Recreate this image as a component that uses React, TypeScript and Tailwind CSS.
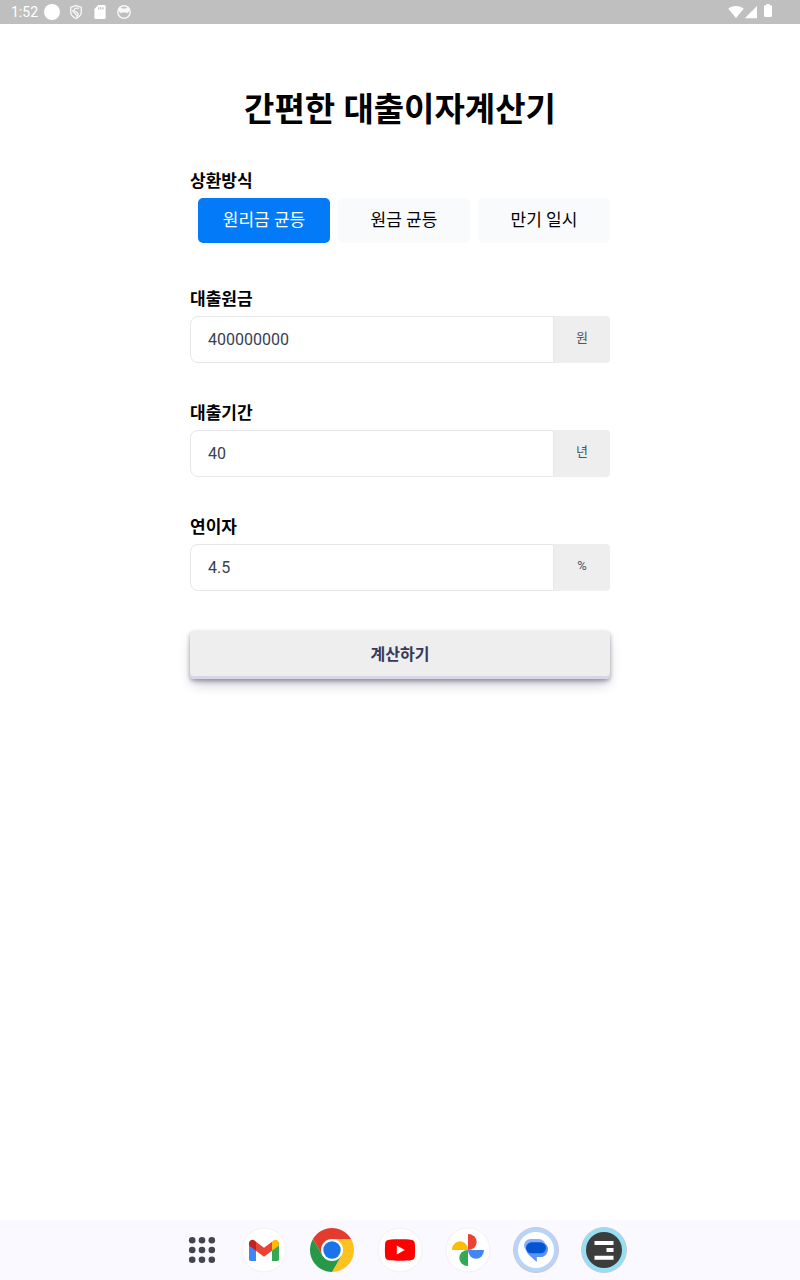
import { useState } from 'react'
import type { FormEvent, ReactNode } from 'react'

const METHODS = ['원리금 균등', '원금 균등', '만기 일시']

type AmountFieldProps = {
  id: string
  label: string
  unit: string
  value: string
  onChange: (value: string) => void
}

function AmountField({ id, label, unit, value, onChange }: AmountFieldProps) {
  return (
    <div>
      <label htmlFor={id} className="mb-0.5 block text-[17px] leading-[30px] font-bold text-black">
        {label}
      </label>
      <div className="flex h-[47px]">
        <input
          id={id}
          type="text"
          inputMode="decimal"
          value={value}
          onChange={(event) => onChange(event.target.value)}
          className="min-w-0 flex-1 rounded-l-lg border border-gray-200 bg-white px-[17px] text-base text-gray-700 outline-none"
        />
        <span className="flex w-14 items-center justify-center rounded-r-[4px] bg-[#eeeeee] pb-1 text-[13px] text-gray-600">
          {unit}
        </span>
      </div>
    </div>
  )
}

function StatusBar() {
  return (
    <header className="flex h-6 items-center justify-between bg-[#bfbfbf] pr-6 pl-[11px] text-white">
      <div className="flex items-center gap-2">
        <span className="-mr-0.5 text-sm leading-6">1:52</span>
        <svg viewBox="0 0 16 16" className="size-4" fill="currentColor" aria-hidden="true">
          <circle cx="8" cy="8" r="8" />
        </svg>
        <svg viewBox="0 0 16 16" className="size-4" fill="none" stroke="currentColor" strokeWidth="1.4" opacity="0.85" aria-hidden="true">
          <path d="M8 1.500 2.700 3.400v4.200c0 3.200 2.200 5.800 5.300 7 3.100-1.200 5.300-3.800 5.300-7V3.400z" />
          <path d="M11 4.500C8.500 3.500 5.800 4.500 6.300 6.400c.5 1.700 4 1.700 3.900 3.800-.1 1.100-.8 1.900-2 2.600M4.300 6c.8 2.600 2.600 3.400 5.200 5.800" />
        </svg>
        <svg viewBox="0 0 16 16" className="size-4" fill="currentColor" aria-hidden="true">
          <path fillRule="evenodd" d="M6.300 1h6a1.300 1.300 0 0 1 1.300 1.300v11.400a1.300 1.300 0 0 1-1.300 1.300H3.700a1.300 1.300 0 0 1-1.300-1.300V5zM6 3.300v2.300h1.200V3.300zm2.200 0v2.300h1.200V3.300zm2.200 0v2.300h1.200V3.300z" />
        </svg>
        <svg viewBox="0 0 16 16" className="size-4" fill="none" stroke="currentColor" opacity="0.9" aria-hidden="true">
          <circle cx="8" cy="8" r="6.200" strokeWidth="1.400" />
          <path fill="currentColor" stroke="none" d="M3 4.500 5 3.300l1 1.200h4l1-1.200 2 1.200v3.300l-1.800 1.400-1-.8H5.800l-1 .8L3 7.800z" />
        </svg>
      </div>
      <div className="flex items-center" aria-hidden="true">
        <svg viewBox="0 0 16 16" className="size-4" fill="currentColor">
          <path d="M8 14 .3 4.800C2.300 3.100 5 2.100 8 2.100s5.700 1 7.700 2.700z" />
        </svg>
        <svg viewBox="0 0 16 16" className="size-4" fill="currentColor">
          <path d="M.8 14.200 13 2v12.200z" />
        </svg>
        <svg viewBox="0 0 16 16" className="size-4" fill="currentColor">
          <path d="M6.300 0h3.400v1.200h1.100c.7 0 1.200.5 1.200 1.200v9.400c0 .7-.5 1.200-1.200 1.200H5.200c-.7 0-1.200-.5-1.200-1.200V2.400c0-.7.500-1.200 1.200-1.200h1.100z" />
        </svg>
      </div>
    </header>
  )
}

function DockIcon({ label, children }: { label: string; children: ReactNode }) {
  return (
    <button type="button" aria-label={label} className="size-12">
      <svg viewBox="0 0 48 48" className="size-12">
        {children}
      </svg>
    </button>
  )
}

function Disc() {
  return <circle cx="24" cy="24" r="22" fill="#fff" stroke="#ececf2" strokeWidth="0.800" />
}

function Dock() {
  return (
    <nav aria-label="Dock" className="flex h-15 items-center justify-center gap-2 bg-[#f9f9ff]">
      <button type="button" aria-label="Apps" className="flex size-15 items-center justify-center">
        <svg viewBox="0 0 28 28" className="size-7" fill="#44444f">
          {[4.2, 14, 23.8].map((y) =>
            [4.2, 14, 23.8].map((x) => <circle key={`${x}-${y}`} cx={x} cy={y} r="3.300" />),
          )}
        </svg>
      </button>
      <div className="flex gap-5">
        <DockIcon label="Gmail">
          <Disc />
          <path fill="#4285f4" d="M9 16.500 16 21.700V35h-5.300A1.700 1.700 0 0 1 9 33.300z" />
          <path fill="#34a853" d="M39 16.500 32 21.700V35h5.300a1.700 1.700 0 0 0 1.700-1.700z" />
          <path fill="#fbbc04" d="m32 15.700 1.400-1.100c2.200-1.700 5.600-.3 5.600 2.700v2.200l-7 5.200z" />
          <path fill="#c5221f" d="m16 15.700-1.400-1.100C12.400 12.900 9 14.300 9 17.300v2.200l7 5.200z" />
          <path fill="#ea4335" d="m16 15.700 8 6 8-6v9l-8 6-8-6z" />
        </DockIcon>
        <DockIcon label="Chrome">
          <path fill="#e33b2e" d="M4.950 13A22 22 0 0 1 43.050 13H24L14.470 29.500z" />
          <path fill="#fcc31e" d="M43.050 13A22 22 0 0 1 24 46L33.530 29.500 24 13z" />
          <path fill="#279847" d="M24 46A22 22 0 0 1 4.950 13L14.470 29.500H33.530z" />
          <circle cx="24" cy="24" r="11" fill="#fff" />
          <circle cx="24" cy="24" r="8.700" fill="#1a73e8" />
        </DockIcon>
        <DockIcon label="YouTube">
          <Disc />
          <path fill="#f00" d="M13 13.800c5-.6 17-.6 22 0 2.700.3 3.700 1.700 3.900 4 .3 4 .3 8.400 0 12.400-.2 2.300-1.200 3.700-3.900 4-5 .6-17 .6-22 0-2.700-.3-3.700-1.700-3.900-4-.3-4-.3-8.400 0-12.400.2-2.300 1.200-3.700 3.900-4z" />
          <path fill="#fff" d="m20.800 19.600 8 4.400-8 4.400z" />
        </DockIcon>
        <DockIcon label="Photos">
          <Disc />
          <path fill="#ea4335" d="M24 8a8.700 8 0 0 1 0 16z" />
          <path fill="#4285f4" d="M40 24a8 8.700 0 0 1-16 0z" />
          <path fill="#34a853" d="M24 40a8.700 8 0 0 1 0-16z" />
          <path fill="#fbbc04" d="M8 24a8 8.700 0 0 1 16 0z" />
        </DockIcon>
        <DockIcon label="Messages">
          <circle cx="24" cy="24" r="22.500" fill="#b9d4fa" stroke="#c9c9d2" />
          <circle cx="24" cy="24" r="18" fill="#fff" />
          <rect x="12" y="13" width="21.500" height="13" rx="6.500" fill="#85aeff" />
          <path fill="#5b91fd" d="M14 22h1l17-4.500c2.500.8 4 2.700 4 5.200 0 4.800-3.200 8.300-7.500 8.300h-3.700v5L18 30c-2.500-2-4-5-4-8z" />
          <rect x="14" y="16.300" width="20" height="11" rx="5.500" fill="#0456d0" />
        </DockIcon>
        <DockIcon label="Tasks">
          <circle cx="24" cy="24" r="22.500" fill="#93dff3" stroke="#c9c9d2" />
          <circle cx="24" cy="24" r="18" fill="#3c3c3c" />
          <path fill="#fff" d="M14.500 15h19v4h-19zM26.500 22h7v4h-7zM14.500 29.700h19v4h-19z" />
        </DockIcon>
      </div>
    </nav>
  )
}

export default function App() {
  const [method, setMethod] = useState(METHODS[0])
  const [principal, setPrincipal] = useState('400000000')
  const [years, setYears] = useState('40')
  const [rate, setRate] = useState('4.5')

  function handleSubmit(event: FormEvent) {
    event.preventDefault()
  }

  return (
    <div className="flex min-h-screen flex-col bg-white font-[Roboto,'Noto_Sans_CJK_KR',sans-serif]">
      <StatusBar />

      <main className="mx-auto w-full max-w-[420px] flex-1 pt-16">
        <h1 className="text-center text-[33px] leading-[44px] font-bold text-black">
          간편한 대출이자계산기
        </h1>

        <form onSubmit={handleSubmit} className="mt-[34px]">
          <fieldset>
            <legend className="mb-0.5 text-[17px] leading-[30px] font-bold text-black">
              상환방식
            </legend>
            <div className="flex gap-2 pl-2">
              {METHODS.map((item) => (
                <button
                  key={item}
                  type="button"
                  aria-pressed={item === method}
                  onClick={() => setMethod(item)}
                  className={`h-[45px] flex-1 rounded-[5px] text-[17px] ${
                    item === method ? 'bg-[#037bf9] text-white' : 'bg-[#f9fafc] text-black'
                  }`}
                >
                  {item}
                </button>
              ))}
            </div>
          </fieldset>

          <div className="mt-[41px] space-y-[35px]">
            <AmountField id="principal" label="대출원금" unit="원" value={principal} onChange={setPrincipal} />
            <AmountField id="years" label="대출기간" unit="년" value={years} onChange={setYears} />
            <AmountField id="rate" label="연이자" unit="%" value={rate} onChange={setRate} />
          </div>

          <button
            type="submit"
            className="mt-10 h-12 w-full rounded-[4px] bg-[#eeeeee] text-base font-bold text-[#36395a] shadow-[0_2px_4px_rgba(45,35,66,0.4),0_7px_13px_-3px_rgba(45,35,66,0.3),inset_0_-3px_0_#d6d6e7]"
          >
            계산하기
          </button>
        </form>
      </main>

      <Dock />
    </div>
  )
}
